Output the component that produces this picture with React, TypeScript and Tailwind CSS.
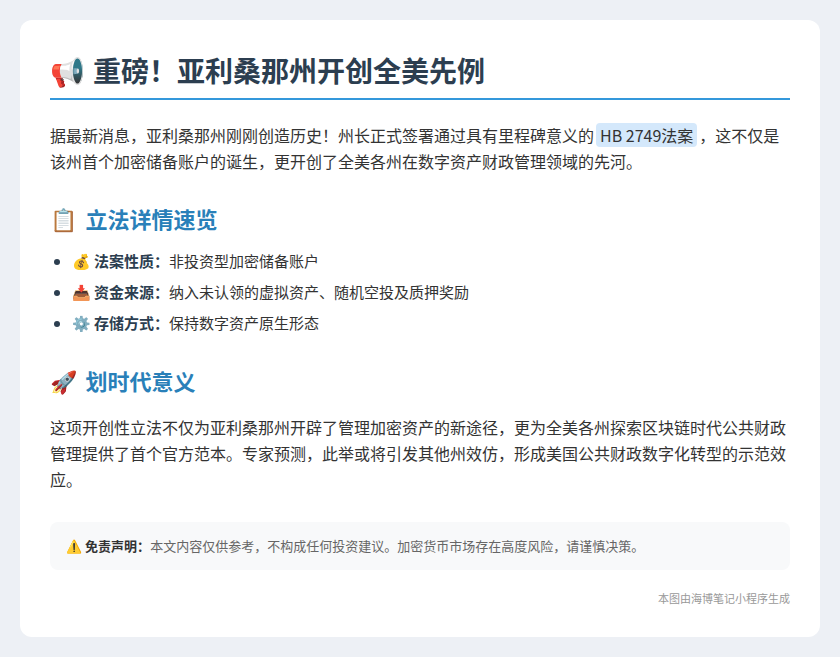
export default function App() {
  const font = { fontFamily: '"Noto Sans CJK SC", "Noto Color Emoji", sans-serif' };
  return (
    <div className="min-h-[657px] bg-[#edf0f5] p-5" style={font}>
      <div className="bg-white rounded-xl px-[30px] pt-[28px] pb-[28px] h-[617px]">
        <h1 className="flex items-center gap-2 text-[28px] font-bold text-[#2c3e50] pb-[6px] border-b-2 border-[#3498db] leading-[44px]">
          <span>📢</span><span>重磅！亚利桑那州开创全美先例</span>
        </h1>
        <p className="mt-[22px] text-[16px] leading-[26px] text-[#333]">
          据最新消息，亚利桑那州刚刚创造历史！州长正式签署通过具有里程碑意义的<span className="bg-[#d4e8fb] rounded px-1 mx-0.5">HB 2749法案</span>，这不仅是该州首个加密储备账户的诞生，更开创了全美各州在数字资产财政管理领域的先河。
        </p>
        <h2 className="mt-[26px] text-[22px] font-bold text-[#2980b9] leading-[36px] flex items-center gap-2"><span>📋</span><span>立法详情速览</span></h2>
        <ul className="mt-[14px] list-disc pl-[22px] text-[15px] text-[#333] space-y-[9px] leading-[22px] marker:text-[#2c3e50]">
          <li><span>💰 <b className="text-[#2c3e50]">法案性质：</b>非投资型加密储备账户</span></li>
          <li><span>📥 <b className="text-[#2c3e50]">资金来源：</b>纳入未认领的虚拟资产、随机空投及质押奖励</span></li>
          <li><span>⚙️ <b className="text-[#2c3e50]">存储方式：</b>保持数字资产原生形态</span></li>
        </ul>
        <h2 className="mt-[28px] text-[22px] font-bold text-[#2980b9] leading-[36px] flex items-center gap-2"><span>🚀</span><span>划时代意义</span></h2>
        <p className="mt-[16px] text-[16px] leading-[26px] text-[#333]">
          这项开创性立法不仅为亚利桑那州开辟了管理加密资产的新途径，更为全美各州探索区块链时代公共财政管理提供了首个官方范本。专家预测，此举或将引发其他州效仿，形成美国公共财政数字化转型的示范效应。
        </p>
        <div className="mt-[30px] bg-[#f8f9fa] rounded-lg px-[16px] py-[13px] text-[13px] leading-[22px] text-[#666]">
          ⚠️ <b className="text-[#333]">免责声明：</b>本文内容仅供参考，不构成任何投资建议。加密货币市场存在高度风险，请谨慎决策。
        </div>
        <div className="mt-[20px] text-right text-[11px] text-[#999]">本图由海博笔记小程序生成</div>
      </div>
    </div>
  );
}
